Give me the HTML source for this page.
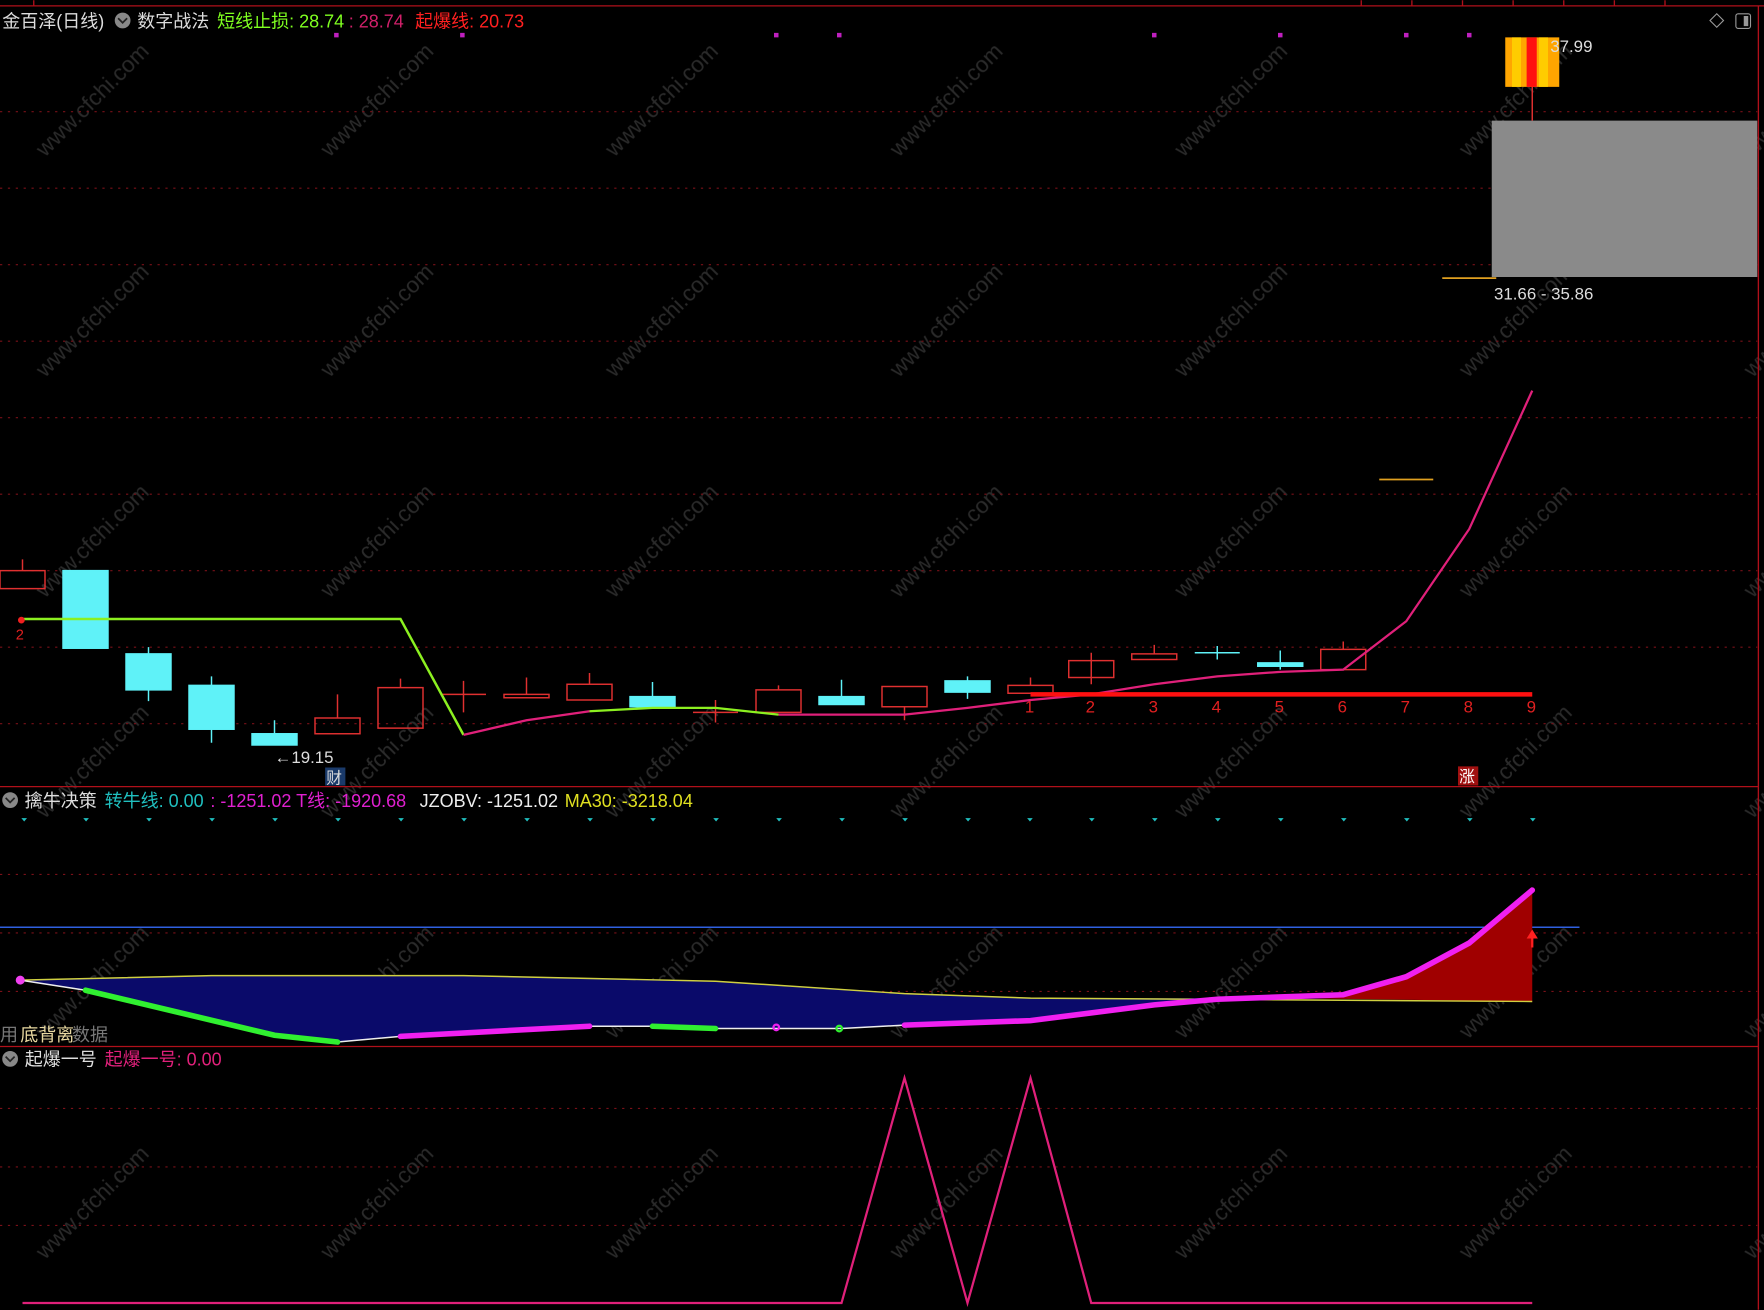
<!DOCTYPE html>
<html><head><meta charset="utf-8"><style>
html,body{margin:0;padding:0;background:#000;width:1764px;height:1310px;overflow:hidden}
svg{display:block}
text{font-family:"Liberation Sans","Noto Sans CJK SC",sans-serif}
</style></head><body>
<svg width="1764" height="1310" viewBox="0 0 1568 1164" xmlns="http://www.w3.org/2000/svg">
<rect width="1568" height="1164" fill="#000"/>
<defs>
<pattern id="wm" x="0" y="0" width="253" height="196" patternUnits="userSpaceOnUse">
<text x="0" y="0" transform="translate(40,140) rotate(-45)" font-size="20" fill="#2a2a2a" font-family="Liberation Sans, sans-serif">www.cfchi.com</text>
</pattern>
</defs>
<rect width="1568" height="1164" fill="url(#wm)"/>
<!-- frame -->
<g stroke="#b0101a" stroke-width="1.2" fill="none">
<line x1="0" y1="5" x2="1568" y2="5"/>
<line x1="1563" y1="5" x2="1563" y2="1164"/>
<line x1="0" y1="699" x2="1563" y2="699"/>
<line x1="0" y1="930" x2="1563" y2="930"/>
<line x1="30" y1="0" x2="30" y2="5"/><line x1="1210" y1="0" x2="1210" y2="5"/><line x1="1255" y1="0" x2="1255" y2="5"/><line x1="1300" y1="0" x2="1300" y2="5"/><line x1="1345" y1="0" x2="1345" y2="5"/><line x1="1390" y1="0" x2="1390" y2="5"/><line x1="1435" y1="0" x2="1435" y2="5"/><line x1="1480" y1="0" x2="1480" y2="5"/>
</g>
<g stroke="#7a1018" stroke-width="1" stroke-dasharray="2,5">
<line x1="0" y1="99" x2="1562" y2="99"/><line x1="0" y1="167" x2="1562" y2="167"/><line x1="0" y1="235" x2="1562" y2="235"/><line x1="0" y1="303" x2="1562" y2="303"/><line x1="0" y1="371" x2="1562" y2="371"/><line x1="0" y1="439" x2="1562" y2="439"/><line x1="0" y1="507" x2="1562" y2="507"/><line x1="0" y1="575" x2="1562" y2="575"/><line x1="0" y1="643" x2="1562" y2="643"/>
<line x1="0" y1="777" x2="1562" y2="777"/><line x1="0" y1="829" x2="1562" y2="829"/><line x1="0" y1="881" x2="1562" y2="881"/>
<line x1="0" y1="985" x2="1562" y2="985"/><line x1="0" y1="1037" x2="1562" y2="1037"/><line x1="0" y1="1089" x2="1562" y2="1089"/>
</g>
<!-- header panel1 -->
<text x="2" y="24" font-size="16" fill="#ddd">金百泽(日线)</text>
<circle cx="109" cy="18" r="7" fill="#888"/><path d="M105 16 L109 20 L113 16" stroke="#222" stroke-width="1.5" fill="none"/>
<text x="122" y="24" font-size="16" fill="#ddd">数字战法</text>
<text x="193" y="24" font-size="16" fill="#7fff20">短线止损: 28.74</text>
<text x="310" y="24" font-size="16" fill="#d0206a">: 28.74</text>
<text x="369" y="24" font-size="16" fill="#ff2020">起爆线: 20.73</text>
<g fill="#c020c0"><rect x="688" y="29" width="4" height="4"/><rect x="744" y="29" width="4" height="4"/><rect x="297" y="29" width="4" height="4"/><rect x="409" y="29" width="4" height="4"/><rect x="1024" y="29" width="4" height="4"/><rect x="1136" y="29" width="4" height="4"/><rect x="1248" y="29" width="4" height="4"/><rect x="1304" y="29" width="4" height="4"/></g>
<path d="M1526 12 L1532 18 L1526 24 L1520 18 Z" stroke="#999" fill="none"/>
<rect x="1543" y="12" width="13" height="13" rx="2" stroke="#999" fill="none"/><rect x="1550" y="14" width="4" height="9" fill="#999"/>
<!-- candles -->
<g stroke="#e03030" stroke-width="1.3" fill="none">
<line x1="20" y1="497" x2="20" y2="507"/><rect x="0" y="507" width="40" height="16"/>
<line x1="300" y1="617" x2="300" y2="638"/><rect x="280" y="638" width="40" height="14"/>
<line x1="356" y1="603" x2="356" y2="611"/><rect x="336" y="611" width="40" height="36"/>
<line x1="412" y1="605" x2="412" y2="633"/><line x1="392" y1="617" x2="432" y2="617"/>
<line x1="468" y1="602" x2="468" y2="617"/><rect x="448" y="617" width="40" height="3"/>
<line x1="524" y1="598" x2="524" y2="608"/><rect x="504" y="608" width="40" height="14"/>
<line x1="636" y1="622" x2="636" y2="642"/><line x1="616" y1="633" x2="656" y2="633"/>
<line x1="692" y1="609" x2="692" y2="613"/><rect x="672" y="613" width="40" height="20"/>
<line x1="804" y1="628" x2="804" y2="640"/><rect x="784" y="610" width="40" height="18"/>
<line x1="916" y1="602" x2="916" y2="609"/><rect x="896" y="609" width="40" height="7"/>
<line x1="970" y1="580" x2="970" y2="608"/><rect x="950" y="587" width="40" height="15"/>
<line x1="1026" y1="573" x2="1026" y2="581"/><rect x="1006" y="581" width="40" height="5"/>
<line x1="1194" y1="570" x2="1194" y2="577"/><rect x="1174" y="577" width="40" height="18"/>
</g>
<g fill="#5ff2f8" stroke="#5ff2f8" stroke-width="1.3">
<rect x="56" y="507" width="40" height="69"/>
<line x1="132" y1="575" x2="132" y2="623"/><rect x="112" y="581" width="40" height="32"/>
<line x1="188" y1="601" x2="188" y2="660"/><rect x="168" y="609" width="40" height="39"/>
<line x1="244" y1="640" x2="244" y2="662"/><rect x="224" y="652" width="40" height="10"/>
<line x1="580" y1="606" x2="580" y2="628"/><rect x="560" y="619" width="40" height="9"/>
<line x1="748" y1="604" x2="748" y2="626"/><rect x="728" y="619" width="40" height="7"/>
<line x1="860" y1="601" x2="860" y2="621"/><rect x="840" y="605" width="40" height="10"/>
<line x1="1082" y1="574" x2="1082" y2="586"/><line x1="1062" y1="580" x2="1102" y2="580"/>
<line x1="1138" y1="578" x2="1138" y2="595"/><rect x="1118" y="589" width="40" height="3"/>
</g>
<line x1="1226" y1="426" x2="1274" y2="426" stroke="#e0a020" stroke-width="1.5"/>
<line x1="1282" y1="247" x2="1330" y2="247" stroke="#e0a020" stroke-width="1.5"/>
<rect x="1326" y="107" width="236" height="139" fill="#8a8a8a"/>
<line x1="1362" y1="77" x2="1362" y2="107" stroke="#e03030" stroke-width="1.3"/>
<rect x="1338" y="33" width="48" height="44" fill="#ffa500"/>
<rect x="1344" y="33" width="8" height="44" fill="#ffcc00"/><rect x="1368" y="33" width="8" height="44" fill="#ffcc00"/>
<rect x="1357" y="33" width="9" height="44" fill="#ff1010"/>
<text x="1378" y="46" font-size="15" fill="#ddd">37.99</text>
<text x="1328" y="266" font-size="15" fill="#ddd">31.66 - 35.86</text>
<text x="244" y="678" font-size="15" fill="#ddd">←19.15</text>
<rect x="289" y="682" width="18" height="16" fill="#1a3a6a"/><text x="290" y="696" font-size="14" fill="#ddd">财</text>
<rect x="1296" y="681" width="18" height="17" fill="#a01010"/><text x="1297" y="695" font-size="14" fill="#fff">涨</text>
<!-- lines panel1 -->
<polyline points="20,550 356,550 412,653" stroke="#8cf020" stroke-width="2.2" fill="none"/>
<polyline points="412,653 468,640 524,632" stroke="#e0207a" stroke-width="2" fill="none"/>
<polyline points="524,632 580,629 636,629 692,635" stroke="#8cf020" stroke-width="2" fill="none"/>
<polyline points="692,635 804,635 860,629 916,622 970,617 1026,608 1082,601 1138,597 1194,595 1250,552 1306,470 1362,347" stroke="#e0207a" stroke-width="2" fill="none"/>
<circle cx="19" cy="551" r="3" fill="#f02020"/><text x="14" y="568" font-size="13" fill="#e02020">2</text>
<line x1="916" y1="617" x2="1362" y2="617" stroke="#ff1010" stroke-width="4"/>
<g font-size="15" fill="#e02020"><text x="911" y="633">1</text><text x="965" y="633">2</text><text x="1021" y="633">3</text><text x="1077" y="633">4</text><text x="1133" y="633">5</text><text x="1189" y="633">6</text><text x="1245" y="633">7</text><text x="1301" y="633">8</text><text x="1357" y="633">9</text></g>
<!-- panel2 -->
<circle cx="9" cy="711" r="7" fill="#888"/><path d="M5 709 L9 713 L13 709" stroke="#222" stroke-width="1.5" fill="none"/>
<text x="22" y="717" font-size="16" fill="#ddd">擒牛决策</text>
<text x="93" y="717" font-size="16" fill="#20c0c0">转牛线: 0.00</text>
<text x="187" y="717" font-size="16" fill="#e020d0">: -1251.02  T线: -1920.68</text>
<text x="373" y="717" font-size="16" fill="#eee">JZOBV: -1251.02</text>
<text x="502" y="717" font-size="16" fill="#e0e020">MA30: -3218.04</text>
<g fill="#20c0c0"><path d="M19 727h5l-2.5 3z"/><path d="M74 727h5l-2.5 3z"/><path d="M130 727h5l-2.5 3z"/><path d="M186 727h5l-2.5 3z"/><path d="M242 727h5l-2.5 3z"/><path d="M298 727h5l-2.5 3z"/><path d="M354 727h5l-2.5 3z"/><path d="M410 727h5l-2.5 3z"/><path d="M466 727h5l-2.5 3z"/><path d="M522 727h5l-2.5 3z"/><path d="M578 727h5l-2.5 3z"/><path d="M634 727h5l-2.5 3z"/><path d="M690 727h5l-2.5 3z"/><path d="M746 727h5l-2.5 3z"/><path d="M802 727h5l-2.5 3z"/><path d="M858 727h5l-2.5 3z"/><path d="M913 727h5l-2.5 3z"/><path d="M968 727h5l-2.5 3z"/><path d="M1024 727h5l-2.5 3z"/><path d="M1080 727h5l-2.5 3z"/><path d="M1136 727h5l-2.5 3z"/><path d="M1192 727h5l-2.5 3z"/><path d="M1248 727h5l-2.5 3z"/><path d="M1304 727h5l-2.5 3z"/><path d="M1360 727h5l-2.5 3z"/></g>
<line x1="0" y1="824" x2="1404" y2="824" stroke="#2f60e0" stroke-width="1.3"/>
<polygon points="18,871 76,880 244,920 300,926 356,921 524,912 580,912 636,914 748,914 804,911 916,907 1026,893 1082,888 1150,886 1150,887 916,887 804,883 636,872 412,867 188,867" fill="#0a0a6a"/>
<polygon points="1150,886 1194,884 1250,868 1306,838 1362,791 1362,890 1150,887" fill="#a00000"/>
<polyline points="18,871 188,867 412,867 636,872 804,883 916,887 1362,890" stroke="#d0d040" stroke-width="1.3" fill="none"/>
<polyline points="18,871 76,880 244,920 300,926 356,921 524,912 580,912 636,914 748,914 804,911 916,907 1026,893 1082,888 1194,884 1250,868 1306,838 1362,791" stroke="#eee" stroke-width="1.3" fill="none"/>
<g stroke="#30f030" stroke-width="5" fill="none" stroke-linecap="round"><polyline points="76,880 244,920 300,926"/><line x1="580" y1="912" x2="636" y2="914"/><circle cx="746" cy="914" r="1"/></g>
<g stroke="#f020f0" stroke-width="5" fill="none" stroke-linecap="round"><polyline points="356,921 524,912"/><circle cx="690" cy="913" r="1"/><polyline points="804,911 916,907 1026,893 1082,888 1194,884 1250,868 1306,838 1362,791"/></g>
<circle cx="18" cy="871" r="4" fill="#f040f0"/>
<path d="M1362 826 L1367 834 L1363 834 L1363 842 L1361 842 L1361 834 L1357 834 Z" fill="#ff2020"/>
<text x="0" y="925" font-size="16" fill="#777">用</text><text x="18" y="925" font-size="16" fill="#e8d8a0">底背离</text><text x="64" y="925" font-size="16" fill="#777">数据</text>
<!-- panel3 -->
<circle cx="9" cy="941" r="7" fill="#888"/><path d="M5 939 L9 943 L13 939" stroke="#222" stroke-width="1.5" fill="none"/>
<text x="22" y="947" font-size="16" fill="#ddd">起爆一号</text>
<text x="93" y="947" font-size="16" fill="#e0207a">起爆一号: 0.00</text>
<polyline points="20,1158 748,1158 804,958 860,1158 916,958 970,1158 1362,1158" stroke="#e0207a" stroke-width="2" fill="none"/>
</svg>
</body></html>
